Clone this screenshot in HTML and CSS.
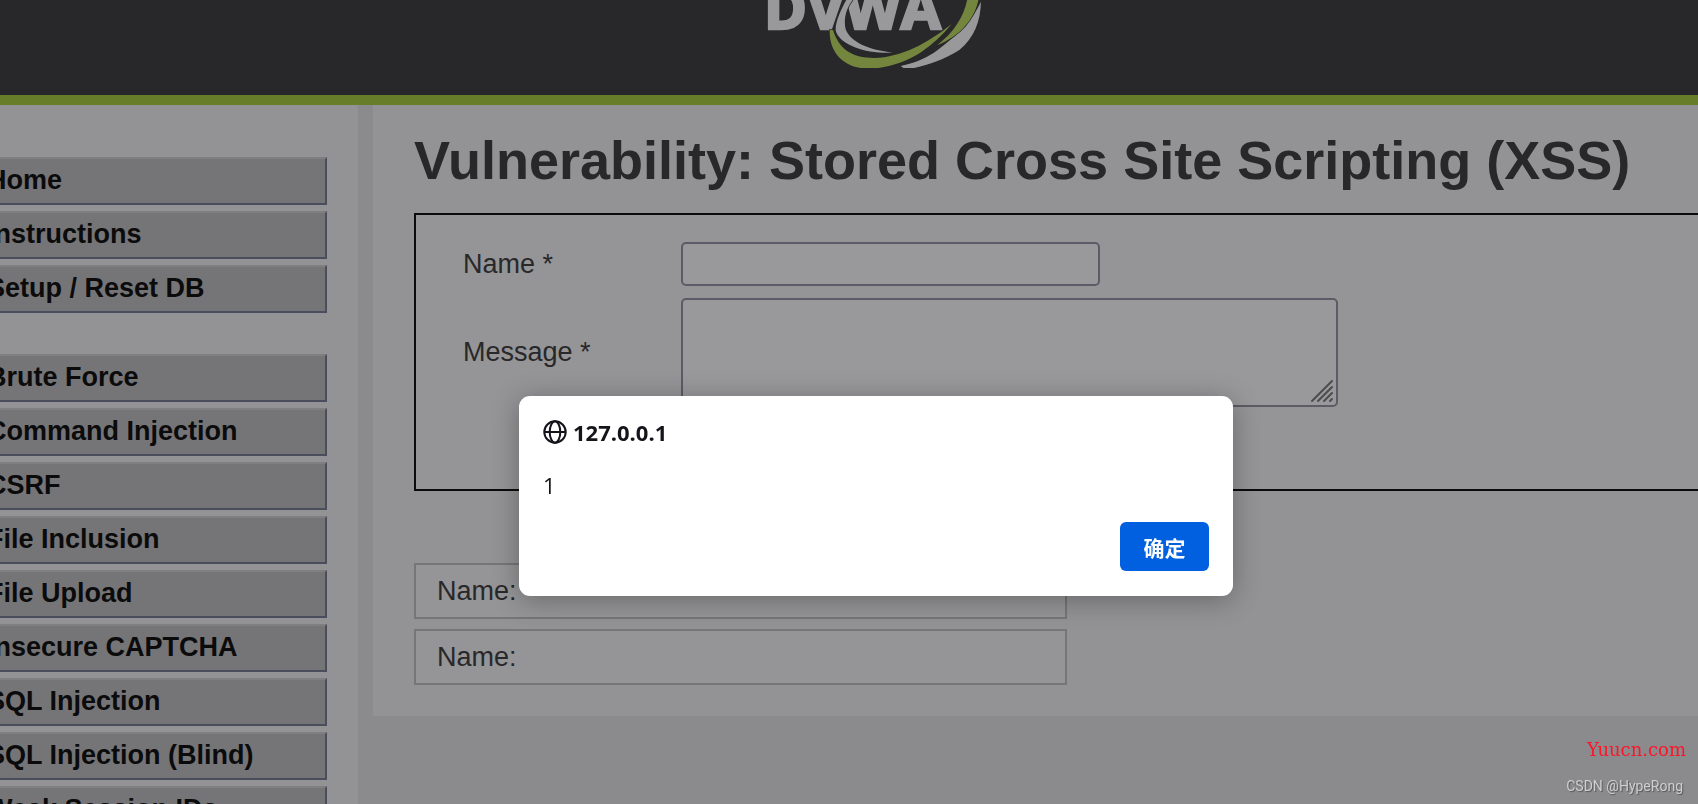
FILE: index.html
```html
<!doctype html>
<html lang="en">

<head>
  <title>Vulnerability: Stored Cross Site Scripting (XSS)</title>
  <meta charset="utf-8" />
  <link rel="stylesheet" href="styles.css">
</head>

<body>
  <div class="page">
    <header class="header">
      <svg class="logo" width="270" height="68" viewBox="0 0 810 204" role="img" aria-label="DVWA">
        <text class="logo-text" x="69" y="87">DVWA</text>
        <g stroke="#28282a" stroke-width="4" paint-order="stroke">
          <path fill="#99999b" d="M318 -4 C296 35 280 75 285 95 C302 138 380 162 455 158 C385 150 330 128 314 88 C306 55 318 20 338 -4Z" />
          <path fill="#99999b" d="M720 5 C718 65 700 112 655 150 C605 182 555 196 510 206 L490 206 L479 198 C530 187 560 172 590 150 C645 108 690 68 720 5Z" />
          <path fill="#74863e" d="M266 90 C264 159 310 206 385 206 C440 205 500 184 540 157 C575 132 605 105 632 72 C560 130 480 172 400 174 C330 173 294 147 276 90Z" />
          <path fill="#74863e" d="M679 -4 C670 48 640 96 588 136 C660 107 702 55 713 -4Z" />
        </g>
      </svg>
    </header>

    <div class="columns">
      <nav class="sidebar">
        <ul class="menu">
          <li><a href="#">Home</a></li>
          <li><a href="#">Instructions</a></li>
          <li><a href="#">Setup / Reset DB</a></li>
        </ul>
        <ul class="menu">
          <li><a href="#">Brute Force</a></li>
          <li><a href="#">Command Injection</a></li>
          <li><a href="#">CSRF</a></li>
          <li><a href="#">File Inclusion</a></li>
          <li><a href="#">File Upload</a></li>
          <li><a href="#">Insecure CAPTCHA</a></li>
          <li><a href="#">SQL Injection</a></li>
          <li><a href="#">SQL Injection (Blind)</a></li>
          <li><a href="#">Weak Session IDs</a></li>
        </ul>
      </nav>

      <main class="content">
        <h1>Vulnerability: Stored Cross Site Scripting (XSS)</h1>

        <form class="guestform">
          <label for="name">Name *</label>
          <input id="name" type="text" />
          <label for="message">Message *</label>
          <div class="message-box">
            <textarea id="message"></textarea>
            <svg class="grip" width="24" height="24" viewBox="0 0 24 24">
              <path d="M2 22L22 2M8 22L22 8M14 22L22 14M20 22L22 20" />
            </svg>
          </div>
        </form>

        <div class="comments">
          <div class="comment">Name:</div>
          <div class="comment">Name:</div>
        </div>
      </main>
    </div>
  </div>

  <!-- alert box -->
  <div class="overlay">
    <div class="dialog" role="alertdialog" aria-labelledby="host" aria-describedby="alert-text">
      <div class="dialog-title">
        <svg width="24" height="24" viewBox="0 0 24 24">
          <circle cx="12" cy="12" r="10.7" />
          <ellipse cx="12" cy="12" rx="5.3" ry="10.7" />
          <path d="M1 12H23" />
        </svg>
        <strong id="host">127.0.0.1</strong>
      </div>
      <p id="alert-text">1</p>
      <button type="button">确定</button>
    </div>
  </div>

  <div class="watermarks">
    <span class="site">Yuucn.com</span>
    <span class="author">CSDN @HypeRong</span>
  </div>
</body>

</html>
```
FILE: styles.css
```css
* {
  box-sizing: border-box;
}

html,
body {
  height: 100%;
  overflow: hidden;
}

body {
  margin: 0;
  background-color: #8b8b8d;
  color: #28282a;
  font-family: "Liberation Sans", Arial, sans-serif;
  font-size: 27px;
  line-height: 32px;
}

/* the page is a little wider than the window */
.page {
  display: flex;
  flex-direction: column;
  height: 100%;
  margin-right: -54px;
}

.header {
  flex: none;
  height: 105px;
  background-color: #28282a;
  border-bottom: 10px solid #687d2a;
  text-align: center;
}

.logo {
  display: block;
  margin: 0 auto;
}

.logo-text {
  font-family: "Open Sans", sans-serif;
  font-size: 174px;
  font-weight: bold;
  fill: #99999b;
  stroke: #99999b;
  stroke-width: 8px;
}

.columns {
  display: flex;
  flex: 1;
  align-items: flex-start;
  gap: 15px;
  min-height: 0;
}

.sidebar {
  flex: none;
  width: 400px;
  height: 100%;
  margin-left: -42px;
  padding: 52px 31px 0 0;
  overflow: hidden;
  background-color: #939395;
}

.menu {
  margin: 0 0 41px;
  padding: 0;
  list-style: none;
}

.menu li {
  margin-bottom: 6px;
}

.menu li:last-child {
  margin-bottom: 0;
}

.menu a {
  display: block;
  height: 48px;
  padding: 5px 0 0 27px;
  background-color: #757577;
  border: 2px solid #4a4d5c;
  border-top-color: #7f7f81;
  color: #0b0b0c;
  font-weight: bold;
  text-decoration: none;
}

.content {
  flex: 1;
  padding: 23px 41px 31px;
  background-color: #939395;
}

h1 {
  margin: 0 0 21px;
  font-size: 54px;
  line-height: 64px;
  white-space: nowrap;
}

.guestform {
  display: grid;
  grid-template-columns: 218px 1fr;
  row-gap: 12px;
  align-items: center;
  padding: 27px 0 82px 47px;
  background-color: #959597;
  border: 2px solid #0b0b0c;
}

.guestform label {
  padding-bottom: 1px;
}

.guestform input,
.guestform textarea {
  display: block;
  background-color: #99999b;
  border: 2px solid #5c5b66;
  border-radius: 5px;
  font: inherit;
}

.guestform input {
  width: 419px;
  height: 44px;
}

.message-box {
  position: relative;
  width: 657px;
}

.guestform textarea {
  width: 100%;
  height: 109px;
  resize: none;
}

.grip {
  position: absolute;
  right: 4px;
  bottom: 4px;
  fill: none;
  stroke: #4c4c4f;
  stroke-width: 2;
  stroke-linecap: round;
}

.comments {
  display: grid;
  gap: 10px;
  width: 653px;
  margin-top: 72px;
}

.comment {
  height: 56px;
  padding: 10px 21px;
  background-color: #959597;
  border: 2px solid #767678;
}

.overlay {
  position: fixed;
  top: 396px;
  left: 0;
  right: -54px;
}

.dialog {
  width: 714px;
  height: 200px;
  margin: 0 auto;
  padding: 20px 24px 24px;
  background-color: #fff;
  border-radius: 11px;
  box-shadow: 0 4px 28px rgba(0, 0, 0, 0.3);
  color: #15141a;
  font-family: "Open Sans", "Noto Sans CJK SC", sans-serif;
  font-size: 22px;
}

.dialog-title {
  display: flex;
  align-items: center;
  gap: 6px;
}

.dialog-title svg {
  fill: none;
  stroke: #15141a;
  stroke-width: 2;
}

.dialog p {
  margin: 21px 0;
}

.dialog button {
  display: block;
  width: 89px;
  height: 49px;
  margin-left: auto;
  padding: 0;
  background-color: #0060df;
  border: 0;
  border-radius: 6px;
  color: #fbfbfe;
  font-family: "Noto Sans CJK SC", sans-serif;
  font-size: 21px;
  font-weight: bold;
}

.watermarks {
  position: fixed;
  right: 12px;
  bottom: 8px;
  display: flex;
  flex-direction: column;
  align-items: flex-end;
  gap: 16px;
  line-height: 20px;
}

.site {
  color: #ff1428;
  font-family: "DejaVu Serif", serif;
  font-size: 18px;
}

.author {
  padding-right: 3px;
  color: #cfcfd1;
  font-family: Roboto, sans-serif;
  font-size: 14px;
  text-shadow: 1px 1px 1px #555557;
}
```
